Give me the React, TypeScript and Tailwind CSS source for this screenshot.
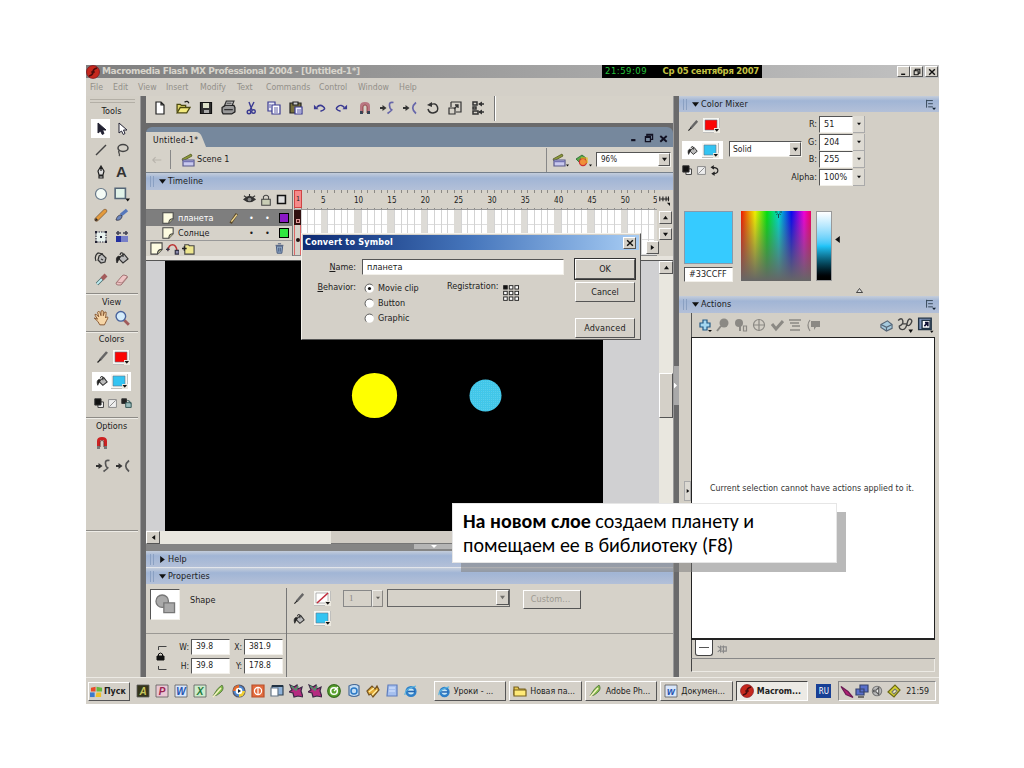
import React from "react";

type P = { children?: React.ReactNode; className?: string };

function Ic({ children, className = "w-[14px] h-[14px]" }: P) {
  return (
    <svg viewBox="0 0 14 14" fill="none" stroke="#333" strokeWidth="1.2" className={"shrink-0 " + className}>
      {children}
    </svg>
  );
}

const raised = "border border-t-white border-l-white border-r-[#555] border-b-[#555] bg-[#d4d0c8]";
const sunken = "border border-t-[#555] border-l-[#555] border-r-[#f2f0ea] border-b-[#f2f0ea] bg-white";

function Tri({ dir = "down", className = "w-[5px] h-[5px]" }: { dir?: string; className?: string }) {
  const d: Record<string, string> = {
    down: "M0 1h6L3 5z",
    up: "M0 5h6L3 1z",
    left: "M5 0v6L1 3z",
    right: "M1 0v6l4-3z",
  };
  return (
    <svg viewBox="0 0 6 6" className={"shrink-0 " + className}>
      <path d={d[dir]} fill="#111" />
    </svg>
  );
}

/* ---------- icons ---------- */
const Pencil = ({ c = "#e39a3c" }: { c?: string }) => (
  <Ic>
    <path d="M2.5 11.5L11 3" stroke="#8b6a48" strokeWidth="4.400" strokeLinecap="round" />
    <path d="M3.5 10.5L11 3" stroke={c} strokeWidth="3" strokeLinecap="round" />
    <path d="M1 13l1-3 2 2z" fill="#222" stroke="none" />
  </Ic>
);
const ThinPencil = ({ className }: P) => (
  <Ic className={className}>
    <path d="M4 10l7-8" stroke="#666" strokeWidth="2.600" />
    <path d="M1.500 12.500l3-3" stroke="#222" strokeWidth="1.2" />
  </Ic>
);
const Brush = () => (
  <Ic>
    <path d="M6 7l6-5" stroke="#5577bb" strokeWidth="3.400" />
    <path d="M1 12c1-4 3-5 5-5l1 1c0 3-3 5-6 4z" fill="#6a85bd" stroke="#334" strokeWidth=".8" />
  </Ic>
);
const Bucket = ({ className }: P) => (
  <Ic className={className}>
    <path d="M5 6l4-3 4 5-5 4-4-4z" fill="#bbb" stroke="#333" />
    <path d="M8 6V2.500Q6 .5 5 4" />
    <path d="M4 5Q0 6 2 12Q3.500 9 5 6z" fill="#222" stroke="#222" strokeWidth=".8" />
  </Ic>
);
const InkBottle = () => (
  <Ic>
    <path d="M5 5l3-2 4 4-1 4-4 1-3-3z" fill="#bbb" />
    <path d="M2 10Q0 5 4 2L9 3" />
    <path d="M7 8l2 1" />
  </Ic>
);
const Dropper = () => (
  <Ic>
    <path d="M3 11l6-6" stroke="#466" strokeWidth="3.400" />
    <path d="M3 11l5-5" stroke="#bdeaf0" strokeWidth="2" />
    <path d="M8 6l4-4" stroke="#a35b5b" strokeWidth="4" />
  </Ic>
);
const Eraser = () => (
  <Ic>
    <path d="M1 10l6-7q1-1 2-1l3 1q1 1 0 2l-6 7H3q-2 0-2-2z" fill="#eec4c4" stroke="#9a6b6b" strokeWidth=".9" />
    <path d="M2 9l5 1 5-6" stroke="#9a6b6b" strokeWidth=".7" />
  </Ic>
);
const Magnet = ({ c = "#c22" }: { c?: string }) => (
  <Ic>
    <path d="M3.500 11V5q0-2.500 3.500-2.500T10.500 5v6" stroke={c} strokeWidth="3" />
    <path d="M3.500 10v3M10.500 10v3" stroke="#777" strokeWidth="3" />
    <path d="M5.200 11V6q0-1.500 1.800-1.500T8.800 6v5" stroke="#411" strokeWidth=".6" />
  </Ic>
);
const SnapS = ({ c = "#6666aa" }: { c?: string }) => (
  <Ic>
    <path d="M0 7h4" strokeWidth="2" />
    <path d="M2.500 4l4 3-4 3z" fill="#333" stroke="none" />
    <path d="M13.500 1.500Q9 .5 9.500 4.500T11.500 8.500T7.500 12.500" stroke={c} strokeWidth="1.700" />
  </Ic>
);
const SnapC = ({ c = "#6666aa" }: { c?: string }) => (
  <Ic>
    <path d="M0 7h4" strokeWidth="2" />
    <path d="M2.500 4l4 3-4 3z" fill="#333" stroke="none" />
    <path d="M13 1.500Q6.500 7 13 12.500" stroke={c} strokeWidth="1.700" />
  </Ic>
);
const Arrow = ({ f = "#223" }: { f?: string }) => (
  <Ic>
    <path d="M4 1v10l2.500-2 1.800 3.500 1.700-1L8.500 8H12z" fill={f} stroke="#223" strokeWidth="1" />
  </Ic>
);
const BW = () => (
  <Ic className="w-[11px] h-[11px]">
    <path d="M5 5h7v7H5z" fill="#fff" />
    <path d="M1 1h8v8H1z" fill="#111" />
  </Ic>
);
const NoCol = () => (
  <Ic className="w-[11px] h-[11px]">
    <path d="M2 2h10v10H2zM3 11l8-8" stroke="#888" fill="#eee" />
  </Ic>
);
const Swap = () => (
  <Ic className="w-[11px] h-[11px]">
    <path d="M3 3q7 0 7 4t-6 4M5 1L2 3l3 2M6 9l-3 2 3 2" stroke="#222" strokeWidth="1.5" />
  </Ic>
);
const Page = ({ className = "w-[13px] h-[13px]" }: P) => (
  <Ic className={className}>
    <path d="M1 1h12v7l-5 5H1z" fill="#fdfbe0" stroke="#444" />
    <path d="M13 8Q8 8 8 13" fill="#cc9" stroke="#444" />
  </Ic>
);
const Clapper = () => (
  <Ic>
    <path d="M1 6L10 1l1 2-9 5z" fill="#8c9a3a" stroke="#565a22" strokeWidth=".8" />
    <path d="M2 7h11v6H2z" fill="#c9c9ee" stroke="#5a5a8a" />
    <path d="M2 8.500h11" stroke="#7474b4" strokeWidth="1.5" />
  </Ic>
);
const Shapes = () => (
  <Ic>
    <path d="M1 6l6-4 4 3-6 5z" fill="#5aa845" stroke="#263" strokeWidth=".8" />
    <circle cx="8" cy="9" r="3.600" fill="#f09038" stroke="#c33" />
    <path d="M6 5h6v5" stroke="#e0c020" />
  </Ic>
);
const Menu = () => (
  <Ic className="w-[11px] h-[11px]">
    <path d="M2 1v10M2 2h8M4 6h6M4 10h6" stroke="#345" />
    <path d="M9 11h5l-2.500 3z" fill="#123" stroke="none" />
  </Ic>
);
const Ie = ({ className }: P) => (
  <Ic className={className}>
    <circle cx="7" cy="7.500" r="4.300" stroke="#2f7fc8" strokeWidth="2.600" fill="#cbe8f6" />
    <path d="M4 7.500h7" stroke="#2363b0" strokeWidth="1.600" />
    <path d="M1 11Q0 5 12 2" stroke="#58b4e0" strokeWidth="1.200" />
  </Ic>
);

function Swatch({ kind }: { kind: "red" | "blue" | "none" }) {
  return (
    <svg viewBox="0 0 17 15" className="w-[17px] h-[15px] shrink-0">
      <rect width="17" height="15" fill="#f6f6f2" />
      <path d="M0 15h17V0" stroke="#888" fill="none" />
      <path d="M2 2h12v10H2z" fill={kind === "red" ? "#fb0505" : kind === "blue" ? "#33c4f2" : "#fff"} stroke={kind === "none" ? "#888" : "#678"} strokeWidth=".6" />
      {kind === "none" && <path d="M3 12L14 2" stroke="#c22c3c" strokeWidth="1.600" />}
      <path d="M11 10h6v5h-6z" fill="#ece9e0" />
      <path d="M11.500 11h4.500l-2.200 2.700z" fill="#111" />
    </svg>
  );
}

function PanelHead({ title, dir = "down", menu, className = "h-[17px]" }: { title: string; dir?: string; menu?: boolean; className?: string }) {
  return (
    <div className={"flex shrink-0 items-center bg-linear-to-b from-[#c4cddb] via-[#a1b5d5] via-30% to-[#b3c0d8] " + className}>
      <div className="ml-[4px] h-[11px] w-[4px] border-x border-[#8aa0c2]" />
      <Tri dir={dir} className="ml-[5px] h-[7px] w-[7px]" />
      <span className="ml-[2px] tracking-[0.1px]">{title}</span>
      {menu && <div className="mr-[3px] ml-auto"><Menu /></div>}
    </div>
  );
}

/* ---------- left tool palette ---------- */
function Section({ children }: P) {
  return <div className="h-[9px] w-[51px] text-center text-[9px] leading-[9px]">{children}</div>;
}
const Rule = () => <div className="h-[2px] w-[52px] shrink-0 border-t border-[#8d8b86] border-b border-b-[#eeece6]" />;

function Tools() {
  return (
    <aside className="flex w-[54px] shrink-0 flex-col bg-[#d3cfc6]">
      <div className="mt-[3px] ml-[4px] h-[4px] w-[45px] border-y border-[#b3afa6]" />
      <div className="mt-[4px]"><Section>Tools</Section></div>
      <div className="mt-[2px] ml-[4px] grid grid-cols-[21px_21px] auto-rows-[21.6px] place-items-center">
        <div className="flex h-[19px] w-[19px] items-center justify-center bg-white"><Arrow /></div>
        <Arrow f="#fff" />
        <Ic><path d="M2 12L12 2" stroke="#444" strokeWidth="1.5" /></Ic>
        <Ic><ellipse cx="8" cy="5" rx="5" ry="3.500" stroke="#444" strokeWidth="1.5" /><path d="M5 7q-2 1-1 3t0 3" stroke="#444" /></Ic>
        <Ic><path d="M7 1L4 6l1 4h4l1-4zM5 11h4v2H5zM7 1v5" fill="#ddd" stroke="#222" /></Ic>
        <span className="font-['Liberation_Sans',sans-serif] text-[15px] leading-none font-bold text-[#333]">A</span>
        <Ic><circle cx="7" cy="7" r="5.500" fill="#f4fbf6" stroke="#678" /></Ic>
        <Ic className="w-[16px] h-[16px]"><path d="M1 2h9v9H1z" fill="#e0f2e8" stroke="#567" strokeWidth="1.4" /><path d="M10 11h4l-2 2.500z" fill="#111" stroke="none" /></Ic>
        <Pencil />
        <Brush />
        <Ic><path d="M2 2h10v10H2z" stroke="#334" strokeDasharray="1.500 1" fill="#e9f2ee" /><path d="M1 1h2v2H1zM11 1h2v2h-2zM1 11h2v2H1zM11 11h2v2h-2zM6 6h2v2H6z" fill="#223" stroke="none" /></Ic>
        <Ic><path d="M1 6h12v6H1z" fill="#7880c8" stroke="none" /><path d="M1 6h5v6H1z" fill="#2430a0" stroke="none" /><path d="M1 3h5M8 3h5" stroke="#445" strokeWidth="1.600" /><path d="M3 1v4M11 1v4" stroke="#445" strokeWidth="1.600" /></Ic>
        <InkBottle />
        <Bucket />
        <Dropper />
        <Eraser />
      </div>
      <div className="mt-[2px]"><Rule /></div>
      <div className="mt-[3px]"><Section>View</Section></div>
      <div className="mt-[2px] ml-[4px] grid h-[19px] grid-cols-[21px_21px] place-items-center">
        <Ic className="w-[16px] h-[16px]"><path d="M4 8L2 5q-1-2 1-1l2 2-1-4q1-2 2 0l1 3V1q1-1 2 0v4l1-3q2-1 1.500 1L11 7l1-1q2 0 0 3l-2 4H6q-1-3-5-6z" fill="#f6d5a6" stroke="#83522c" strokeWidth=".8" /></Ic>
        <Ic className="w-[16px] h-[16px]"><path d="M9 9l4 4" stroke="#a05a5a" strokeWidth="2.500" /><circle cx="6" cy="5.500" r="4.200" fill="#d4ecfb" stroke="#47629c" /></Ic>
      </div>
      <div className="mt-[3px]"><Rule /></div>
      <div className="mt-[2px]"><Section>Colors</Section></div>
      <div className="mt-[6px] ml-[10px] flex h-[15px] items-center gap-[3px]"><ThinPencil /><Swatch kind="red" /></div>
      <div className="mt-[7px] ml-[6px] flex h-[19px] w-[39px] items-center gap-[3px] bg-white pl-[4px]"><Bucket className="w-[12px] h-[12px]" /><Swatch kind="blue" /></div>
      <div className="mt-[7px] ml-[8px] flex gap-[2px]"><BW /><NoCol /><Ic className="w-[13px] h-[11px]"><path d="M1 1h6v6H1z" fill="#222" /><path d="M6 6h7v6H6zM8 3q4 0 4 4" fill="#9bb" stroke="#355" /></Ic></div>
      <div className="mt-[8px]"><Rule /></div>
      <div className="mt-[3px]"><Section>Options</Section></div>
      <div className="mt-[5px] ml-[9px]"><Magnet /></div>
      <div className="mt-[9px] ml-[10px] flex gap-[6px]"><SnapS c="#555" /><SnapC c="#555" /></div>
      <div className="mt-[57px]"><Rule /></div>
    </aside>
  );
}

/* ---------- main toolbar ---------- */
function Toolbar() {
  const u = "#3a3a92";
  return (
    <div className="flex h-[27px] shrink-0 items-start bg-[#d6d2c9] pl-[3px]">
      <div className="grid h-[23px] grid-cols-[repeat(15,22.7px)] place-items-center">
        <Ic><path d="M3 1h5l3 3v9H3zM8 1v3h3" fill="#fff" stroke="#222" /></Ic>
        <Ic className="w-[15px] h-[15px]"><path d="M1 11V4h3l1 1h4v2" fill="#dfd66a" stroke="#4c4a10" /><path d="M1 12l3-5h9l-3 5z" fill="#f3ea7d" stroke="#4c4a10" /><path d="M8 2q3-2 4 1" stroke="#222" /></Ic>
        <Ic><path d="M1.500 1.500h11v11h-11z" fill="#333" stroke="#111" /><path d="M4 2h6v5H4z" fill="#dde0c8" stroke="none" /><path d="M5 9h5v3H5z" fill="#aaa" stroke="none" /></Ic>
        <Ic className="w-[15px] h-[15px]"><path d="M5 1h7l-2 5H3z" fill="#fff" stroke="#333" /><path d="M1 7l3-2h8l1 2v4l-3 2H2l-1-2z" fill="#999" stroke="#222" /><path d="M3 9h8M5 3h5M4 5h5" stroke="#333" /></Ic>
        <Ic><path d="M5 1l3 8M10 1L6 9" stroke={u} strokeWidth="1.400" /><circle cx="5" cy="11" r="1.800" stroke={u} strokeWidth="1.400" /><circle cx="9.500" cy="10.500" r="1.800" stroke={u} strokeWidth="1.400" /></Ic>
        <Ic><path d="M1 1h7v9H1z" fill="#e9eaf5" stroke={u} /><path d="M5 4h8v9H5z" fill="#fff" stroke={u} /><path d="M7 7h4M7 9h4M7 11h4M2 4h2M2 6h2" stroke={u} strokeWidth=".8" /></Ic>
        <Ic><path d="M1 2h11v10H1z" fill="#77703c" stroke="#222" /><path d="M4 1h5v3H4z" fill="#ccc" stroke="#222" /><path d="M6 6h7v7H6z" fill="#eef" stroke={u} /><path d="M8 9h4M8 11h4" stroke={u} strokeWidth=".8" /></Ic>
        <Ic className="w-[13px] h-[13px]"><path d="M4 7q3-4 7-1t-3 5" stroke={u} strokeWidth="1.600" /><path d="M1 4v5h5z" fill={u} stroke="none" /></Ic>
        <Ic className="w-[13px] h-[13px]"><path d="M10 7Q7 3 3 6t3 5" stroke={u} strokeWidth="1.600" /><path d="M13 4v5H8z" fill={u} stroke="none" /></Ic>
        <Ic><path d="M3.500 11V5q0-2.500 3.500-2.500T10.500 5v6" stroke="#b97782" strokeWidth="3" /><path d="M3.500 10v3M10.500 10v3" stroke="#345" strokeWidth="3" /><path d="M5 12V6q0-2 2-2t2 2v6" stroke="#833" strokeWidth=".8" /></Ic>
        <SnapS />
        <SnapC />
        <Ic><path d="M4 4Q10 1 11.500 6T7 12Q3 12 2 8" stroke="#333" strokeWidth="1.500" /><path d="M1 4l5-3v5z" fill="#333" stroke="none" /></Ic>
        <Ic><path d="M3 1h10v10H8M3 1v5M1 7h6v6H1z" /><path d="M6 8l4-4M7 4h3v3" strokeWidth="1.300" /></Ic>
        <Ic><path d="M2 1h4v3H2zM2 6h3v2H2zM2 10h5v3H2zM8 3h5M8 11h5" stroke="#333" strokeWidth="1.500" /><path d="M7 3l4-2.500v5zM7 11l4-2.500v5z" fill="#333" stroke="none" /></Ic>
      </div>
      <div className="ml-[5px] h-[25px] w-[2px] border-l border-[#777] bg-white" />
    </div>
  );
}

/* ---------- document window ---------- */
function Doc() {
  const nums = ["10", "15", "20", "25", "30", "35", "40", "45", "50"];
  return (
    <div className="flex shrink-0 flex-col">
      <div className="flex h-[20px] items-end rounded-t-[6px] bg-[#76889d]">
        <svg viewBox="0 0 64 15" className="h-[15px] w-[64px]">
          <path d="M0 15V0h50q4 0 6 5l4 10z" fill="#d6d2c9" />
          <text x="7" y="10.500" className="font-['DejaVu_Sans_Condensed','DejaVu_Sans',sans-serif] text-[8.500px]" textLength="45" fill="#111">Untitled-1*</text>
        </svg>
        <div className="mr-[5px] mb-[4px] ml-auto flex items-center gap-[5px]">
          <Ic className="h-[10px] w-[10px]"><path d="M3 10h6" stroke="#112" strokeWidth="3" /></Ic>
          <Ic className="h-[10px] w-[10px]"><path d="M4 5V2h8v7H9M2 5h7v7H2zM2 6h7M4 3h8" stroke="#112" strokeWidth="1.800" /></Ic>
          <Ic className="h-[9px] w-[9px]"><path d="M2 3l10 9M12 3L2 12" stroke="#112" strokeWidth="3" /></Ic>
        </div>
      </div>
      <div className="flex h-[26px] items-center border-b border-[#77818c] bg-[#d6d2c9]">
        <Ic className="ml-[6px] h-[10px] w-[10px]"><path d="M1 7h12M5 3L1 7l4 4" stroke="#b7b3ab" strokeWidth="1.500" /></Ic>
        <div className="ml-[8px] h-[19px] w-px bg-[#888]" />
        <div className="ml-[10px]"><Clapper /></div>
        <span className="ml-[2px]">Scene 1</span>
        <div className="ml-auto h-[24px] w-px bg-[#888]" />
        <div className="ml-[5px] flex items-end"><Clapper /><Tri className="h-[3px] w-[3px]" /></div>
        <div className="ml-[6px] flex items-end"><Shapes /><Tri className="h-[3px] w-[3px]" /></div>
        <div className={"ml-[4px] mr-[2px] flex h-[15px] w-[75px] items-center justify-between pl-[4px] text-[8px] " + sunken}>
          96%
          <div className={"flex h-full w-[12px] items-center justify-center " + raised}><Tri /></div>
        </div>
      </div>
      <PanelHead title="Timeline" />
      <div className="flex h-[66px] bg-[#d6d2c9]">
        <div className="flex w-[147px] flex-col border-r border-[#777]">
          <div className="flex h-[20px] items-center justify-end gap-[4px] border-b border-[#777] pr-[5px]">
            <Ic className="h-[13px] w-[13px]"><path d="M0 7q7-8 14 0-7 6-14 0z" fill="#333" stroke="none" /><path d="M1 3l3 2M7 1v3M13 3l-3 2" /><circle cx="7" cy="7" r="2" fill="#888" stroke="none" /></Ic>
            <Ic className="h-[12px] w-[12px]"><path d="M2 6h10v7H2z" fill="#c9cdb5" stroke="#444" /><path d="M4 6V3q3-3 6 0v3" stroke="#444" /></Ic>
            <Ic className="h-[11px] w-[11px]"><path d="M2 2h10v10H2z" strokeWidth="2" stroke="#111" fill="#ddd" /></Ic>
          </div>
          <div className="flex h-[16px] items-center bg-[#7e7e7e] text-white">
            <div className="ml-[16px]"><Page className="h-[12px] w-[12px]" /></div>
            <span className="ml-[4px] w-[51px]">планета</span>
            <Ic className="h-[11px] w-[11px]"><path d="M2 13L10 1" stroke="#5c4a2a" strokeWidth="3.500" /><path d="M3 11L10 2" stroke="#f0d890" strokeWidth="1.800" /></Ic>
            <span className="ml-[9px] w-[16px]">•</span><span className="w-[14px]">•</span>
            <div className="h-[10px] w-[10px] border border-black bg-[#8a18c6]" />
          </div>
          <div className="flex h-[15px] items-center border-b border-[#999]">
            <div className="ml-[16px]"><Page className="h-[12px] w-[12px]" /></div>
            <span className="ml-[4px] w-[71px]">Солнце</span>
            <span className="w-[16px]">•</span><span className="w-[14px]">•</span>
            <div className="h-[10px] w-[10px] border border-black bg-[#2fe63f]" />
          </div>
          <div className="flex h-[15px] items-center gap-[3px] pl-[4px]">
            <Page />
            <Ic className="h-[13px] w-[13px]"><path d="M2 9q1-6 5-6t5 7" stroke="#b33" strokeWidth="1.600" /><path d="M0 8h4M2 6v4M10 9h4v4h-4z" stroke="#334" strokeWidth="1.300" fill="#88a" /></Ic>
            <Ic className="h-[13px] w-[13px]"><path d="M3 3h4l1 1h5v9H3z" fill="#eee68e" stroke="#444" /><path d="M0 7h5M2.500 4.500v5" stroke="#222" strokeWidth="1.400" /></Ic>
            <Ic className="mr-[7px] ml-auto h-[11px] w-[11px]"><path d="M3 4h8l-1 9H4z" fill="#8da6c4" stroke="#47597c" /><path d="M2 3h10M5 1h4M6 6v5M8 6v5" stroke="#47597c" /></Ic>
          </div>
        </div>
        <div className="flex w-[364px] flex-col overflow-hidden border-b border-[#888] pl-[1px]">
          <div className="flex h-[20px] shrink-0 flex-col justify-between border-b border-[#999] bg-[repeating-linear-gradient(90deg,#8c8a86_0_1px,transparent_1px_6.670px)]">
            <div className="mt-[3px] mb-[2px] flex flex-1 items-center bg-[#d6d2c9] text-[8px]">
              <div className="-mt-[3px] flex h-[18px] w-[8px] shrink-0 items-center justify-center border border-[#d04444] bg-[#f58a8a] text-[7px]">1</div>
              <span className="w-[52px] shrink-0 pl-[19px]">5</span>
              {nums.map((n) => <span key={n} className="w-[33.350px] shrink-0">{n}</span>)}
              <span className="-ml-px">5</span>
            </div>
          </div>
          <div className="h-[46px] bg-white bg-[repeating-linear-gradient(90deg,transparent_0_26.700px,#dddbd6_26.700px_33.350px),repeating-linear-gradient(90deg,#d3d3d3_0_1px,transparent_1px_6.670px),repeating-linear-gradient(0deg,#ddd_0_1px,transparent_1px_15px)]">
            <div className="flex h-[15px] w-[7px] items-end justify-center bg-[#301010] pb-[2px]"><div className="h-[4px] w-[4px] border border-[#d99] bg-[#511]" /></div>
            <div className="flex h-[30px] w-[7px] items-center justify-center border-x border-[#d66] bg-[#d6d2c9]"><div className="h-[4px] w-[4px] rounded-full bg-[#211]" /></div>
          </div>
        </div>
        <div className="flex w-[16px] flex-col items-end pr-[1px]">
          <div className="flex h-[21px] w-full items-center justify-center"><Ic className="h-[11px] w-[11px]"><path d="M1 2v6M5 2v6M9 2v6M12 2v6M2 5h11" stroke="#222" strokeWidth="1.400" /><path d="M10 10h4v4z" fill="#111" stroke="none" /></Ic></div>
          <div className={"flex h-[13px] w-[13px] items-center justify-center " + raised}><Tri dir="up" /></div>
          <div className={"mt-[4px] flex h-[12px] w-[13px] items-center justify-center " + raised}><Tri /></div>
          <div className={"mt-[1px] mr-[13px] flex h-[13px] w-[13px] items-center justify-center " + raised}><Tri dir="right" /></div>
        </div>
      </div>
      <div className="h-[5px] border-b border-[#555] bg-[#e6e3dc]" />
    </div>
  );
}

function Stage() {
  return (
    <div className="flex h-[270px] shrink-0 bg-[#d0d0d2]">
      <div className="ml-[19px] h-full w-[438px] bg-black">
        <svg viewBox="0 0 438 270" className="h-full w-full">
          <defs>
            <pattern id="dots" width="2" height="2" patternUnits="userSpaceOnUse">
              <rect width="2" height="2" fill="#35c8f4" />
              <rect width="1" height="1" fill="#62cde2" />
              <rect x="1" y="1" width="1" height="1" fill="#4fc4dc" />
            </pattern>
          </defs>
          <circle cx="209.500" cy="134.500" r="22.600" fill="#ffff00" />
          <circle cx="320.500" cy="134.500" r="16" fill="url(#dots)" />
        </svg>
      </div>
      <div className="ml-auto flex w-[14px] flex-col bg-[#e9e7df]">
        <div className={"flex h-[13px] items-center justify-center " + raised}><Tri dir="up" /></div>
        <div className={"mt-[99px] h-[45px] " + raised} />
      </div>
    </div>
  );
}

function Field({ label, value }: { label: string; value: string }) {
  return (
    <div className="flex items-center">
      <span className="w-[14px] pr-[2px] text-right text-[8.500px]">{label}</span>
      <div className={"h-[16px] w-[39px] pl-[4px] text-[8.500px] leading-[13px] " + sunken}>{value}</div>
    </div>
  );
}

function Properties() {
  return (
    <div className="flex h-[93px] shrink-0 bg-[#d6d2c9]">
      <div className="flex w-[140px] shrink-0 flex-col">
        <div className="flex h-[50px] items-start border-b border-[#9b9994] pt-[5px] pl-[4px]">
          <div className={"flex h-[31px] w-[30px] items-center justify-center " + sunken + " bg-[#ebe9e4]"}>
            <Ic className="h-[23px] w-[23px]"><circle cx="5" cy="5" r="3.800" fill="#aaa" stroke="#777" strokeWidth=".8" /><path d="M6 6h6.500v6H6z" fill="#aaa" stroke="#777" strokeWidth=".8" /></Ic>
          </div>
          <span className="mt-[6px] ml-[10px]">Shape</span>
        </div>
        <div className="flex pt-[5px] pl-[10px]">
          <svg viewBox="0 0 12 30" className="mt-[4px] h-[30px] w-[12px] shrink-0" fill="none" stroke="#444">
            <path d="M2.500 7V3.500h8M2.500 23v3.500h8" />
            <path d="M1 13h7v4H1z" fill="#111" stroke="#111" />
            <path d="M2.500 13v-2q2-2 4 0v2" stroke="#111" />
          </svg>
          <div className="ml-[9px] grid grid-cols-[53px_53px] gap-y-[3px]">
            <Field label="W:" value="39.8" /><Field label="X:" value="381.9" />
            <Field label="H:" value="39.8" /><Field label="Y:" value="178.8" />
          </div>
        </div>
      </div>
      <div className="mt-[4px] w-px bg-[#777]" />
      <div className="min-w-0 flex-1">
        <div className="flex h-[50px] flex-col border-b border-[#9b9994] pt-[5px]">
          <div className="flex h-[18px] items-center pl-[6px]">
            <ThinPencil className="h-[13px] w-[13px]" />
            <div className="ml-[8px]"><Swatch kind="none" /></div>
            <div className="ml-[12px] h-[17px] w-[29px] border border-[#888] pl-[5px] font-['Liberation_Serif',serif] leading-[14px] text-[#8b8983]">1</div>
            <div className={"flex h-[17px] w-[11px] items-center justify-center opacity-60 " + raised}><Tri className="h-[4px] w-[4px]" /></div>
            <div className="ml-[4px] flex h-[18px] w-[123px] justify-end border border-[#666]"><div className={"flex h-[15px] w-[13px] items-center justify-center " + raised}><Tri className="h-[5px] w-[5px] opacity-50" /></div></div>
            <div className={"mt-[3px] ml-[13px] flex h-[19px] w-[58px] shrink-0 items-center justify-center text-[#9c9991] " + raised}><span className="pr-[3px] tracking-[0.100px]">Custom...</span></div>
          </div>
          <div className="mt-[4px] flex items-center pl-[6px]">
            <Bucket className="h-[12px] w-[12px]" />
            <div className="ml-[9px]"><Swatch kind="blue" /></div>
          </div>
        </div>
      </div>
    </div>
  );
}

/* ---------- right panels ---------- */
function Channel({ label, value }: { label: string; value: string }) {
  return (
    <div className="flex h-[17.500px] items-center">
      <span className="w-[30px] pr-[2px] text-right">{label}</span>
      <div className={"h-[17px] w-[34px] pl-[4px] leading-[15px] " + sunken}>{value}</div>
      <div className="flex h-[17px] w-[12px] items-center justify-center border-r border-b border-[#aaa] bg-[#dedbd3]"><Tri className="h-[4px] w-[4px]" /></div>
    </div>
  );
}

function Mixer() {
  return (
    <div className="flex h-[184px] shrink-0 flex-col bg-[#d3cfc6]">
      <div className="flex pt-[4px]">
        <div className="flex w-[50px] flex-col pl-[3px]">
          <div className="flex h-[18px] items-center gap-[3px] pl-[5px]"><ThinPencil className="h-[13px] w-[13px]" /><Swatch kind="red" /></div>
          <div className="mt-[7px] flex h-[18px] w-[41px] items-center gap-[4px] bg-white pl-[5px]"><Bucket className="h-[11px] w-[11px]" /><Swatch kind="blue" /></div>
          <div className="mt-[6px] flex gap-[3px]"><BW /><NoCol /><Swap /></div>
        </div>
        <div className={"mt-[25px] flex h-[16px] w-[73px] items-center justify-between pl-[3px] text-[8.500px] " + sunken}>
          Solid
          <div className={"flex h-full w-[12px] items-center justify-center " + raised}><Tri /></div>
        </div>
        <div className="-ml-[13px] flex flex-col">
          <Channel label="R:" value="51" />
          <Channel label="G:" value="204" />
          <Channel label="B:" value="255" />
          <Channel label="Alpha:" value="100%" />
        </div>
      </div>
      <div className="mt-[25px] flex pl-[5px]">
        <div className="w-[49px]">
          <div className="h-[53px] border border-[#89a] bg-[#36cbff]" />
          <div className={"mt-[3px] h-[15px] pl-[4px] text-[9px] leading-[13px] " + sunken}>#33CCFF</div>
        </div>
        <div className="ml-[8px] h-[70px] w-[70px] bg-[linear-gradient(to_bottom,transparent,#666),linear-gradient(to_right,#f01800,#f0f000_20%,#00e010_37%,#00d8d0_54%,#0808f0_72%,#f000d8_90%,#f00060)]">
          <Ic className="ml-[33px] h-[7px] w-[9px]"><path d="M0 2h5M9 2h5M7 6v8M5 5l-2 3M9 5l2 3" stroke="#222" strokeWidth="1.500" /></Ic>
        </div>
        <div className="ml-[5px] h-[70px] w-[16px] border border-[#999] bg-linear-to-b from-white via-[#20c4f8] to-black" />
        <Tri dir="left" className="mt-[24px] ml-[2px] h-[9px] w-[7px]" />
      </div>
      <Ic className="mt-[5px] ml-[176px] h-[7px] w-[9px]"><path d="M1 11h12L7 3z" stroke="#222" strokeWidth="1.600" fill="#ddd" /></Ic>
    </div>
  );
}

function Actions() {
  const g = "#8b8984";
  return (
    <div className="flex min-h-0 flex-1 flex-col bg-[#d3cfc6]">
      <div className="ml-[12px] flex h-[24px] shrink-0 items-center border-l border-[#555] pl-[6px]">
        <div className="flex items-center gap-[4px]">
          <Ic><path d="M5 2h4v3h3v4H9v3H5V9H2V5h3z" fill="#a5d7ef" stroke="#235a86" /><path d="M10 12h4l-2 2z" fill="#111" stroke="none" /></Ic>
          <Ic><circle cx="8" cy="5" r="4.500" fill={g} stroke="none" /><path d="M5 8l-4 5" stroke={g} strokeWidth="2" /></Ic>
          <Ic><circle cx="5" cy="5" r="4" fill={g} stroke="none" /><path d="M6 7v6" stroke={g} strokeWidth="2" /><path d="M9.500 8h3v5h-3z" stroke={g} /></Ic>
          <Ic><circle cx="7" cy="7" r="5.500" stroke={g} /><path d="M7 1v12M1 7h12" stroke={g} /></Ic>
          <Ic><path d="M2 6l4 5 7-8" stroke={g} strokeWidth="3" /></Ic>
          <Ic><path d="M1 2h12M2 5h9M4 8h8M2 12h10" stroke={g} strokeWidth="1.600" /></Ic>
          <Ic><path d="M4 2Q0 7 4 13" stroke={g} /><path d="M5 3h9v6h-4l-2 3V9H5z" fill={g} stroke="none" /></Ic>
        </div>
        <div className="mr-[5px] ml-auto flex items-center gap-[4px]">
          <Ic className="h-[13px] w-[13px]"><path d="M1 6l7-4 5 4v4l-6 3-6-4z" fill="#a6cadd" stroke="#567" /><path d="M1 6l6 3 6-3M7 9v4" stroke="#567" /></Ic>
          <Ic className="h-[16px] w-[16px]"><path d="M1 3q3-3 4 0T2 8q0 3 3 3t4-6q1-4 3-3t0 4-4 0M5 6h4" stroke="#444" /><path d="M10 11h4l-2 3z" fill="#111" stroke="none" /></Ic>
          <Ic className="h-[16px] w-[17px]"><path d="M1 1h11v10H1z" fill="#7c93bb" stroke="#234" /><path d="M4 3h7v7H4z" fill="#fff" stroke="#234" /><path d="M6 8l3-3M6.500 5H9v3" stroke="#113" strokeWidth="1.500" /><path d="M11 12h3l-1.500 2z" fill="#111" stroke="none" /></Ic>
        </div>
      </div>
      <div className="flex h-[303px] shrink-0">
        <div className="mt-[144px] ml-[5px] flex h-[20px] w-[7px] items-center justify-center border border-[#aaa] bg-[#dcd9d2]"><Tri dir="right" className="h-[4px] w-[4px]" /></div>
        <div className="mr-[4px] flex-1 border border-b-2 border-[#222] bg-white pt-[145px] pl-[18px] text-[#333]">
          <span className="text-[8.800px] tracking-[0.020px] whitespace-nowrap">Current selection cannot have actions applied to it.</span>
        </div>
      </div>
      <div className="mr-[4px] ml-[12px] flex h-[19px] shrink-0 items-start gap-[4px] border-b border-l border-[#888] border-l-[#444] pl-[3px]">
        <div className="flex h-[16px] w-[18px] items-center justify-center rounded-b-[3px] border border-t-0 border-[#444] bg-white"><div className="h-px w-[10px] bg-[#555]" /></div>
        <Ic className="mt-[4px] h-[10px] w-[10px]"><path d="M1 3l5 4-5 4M5 2v10M6 4h7v6H6M9 2v11" stroke="#888" strokeWidth="1.600" /></Ic>
      </div>
      <div className="mr-[4px] ml-[12px] h-[13px] shrink-0 border-r border-b border-l border-[#eceae4] border-l-[#444]" />
    </div>
  );
}

/* ---------- dialog ---------- */
function DlgButton({ children, className = "" }: P) {
  return <div className={"flex h-[20px] w-[60px] items-center justify-center " + raised + " " + className}>{children}</div>;
}
function Radio({ on, children }: P & { on?: boolean }) {
  return (
    <div className="flex h-[15px] items-center gap-[3px]">
      <Ic className="h-[11px] w-[11px]"><circle cx="7" cy="7" r="5.500" fill="#fff" stroke="none" /><path d="M3 11A5.600 5.600 0 0 1 11 3" stroke="#555" />{on && <circle cx="7" cy="7" r="2" fill="#111" stroke="none" />}</Ic>
      <span>{children}</span>
    </div>
  );
}
function Dialog() {
  return (
    <div className="absolute top-[168px] left-[215px] flex h-[107px] w-[340px] flex-col border border-t-[#f4f2ec] border-r-[#555] border-b-[#555] border-l-[#f4f2ec] bg-[#d4d0c8] p-px">
      <div className="flex h-[15px] shrink-0 items-center justify-between bg-linear-to-r from-[#0e2a72] via-[#4676bc] to-[#a8cdf4] pr-[3px] pl-[2px] text-white">
        <span className="text-[9px] font-bold tracking-[0.200px]">Convert to Symbol</span>
        <div className={"flex h-[12px] w-[13px] items-center justify-center " + raised}><Ic className="h-[8px] w-[8px]"><path d="M2 2l10 10M12 2L2 12" stroke="#111" strokeWidth="2.500" /></Ic></div>
      </div>
      <div className="flex pt-[9px]">
        <div className="w-[261px]">
          <div className="flex h-[16px] items-center">
            <span className="w-[54px] pr-[1px] text-right"><u>N</u>ame:</span>
            <div className={"ml-[5px] h-[16px] w-[202px] pl-[4px] leading-[15px] " + sunken}>планета</div>
          </div>
          <div className="flex pt-[5px]">
            <span className="w-[54px] pr-[1px] text-right leading-[14px]"><u>B</u>ehavior:</span>
            <div className="ml-[7px] w-[83px] pt-px"><Radio on>Movie clip</Radio><Radio>Button</Radio><Radio>Graphic</Radio></div>
            <span className="w-[53px] leading-[13px]">Registration:</span>
            <svg viewBox="0 0 17 17" className="mt-[5px] ml-[3px] h-[16px] w-[16px]">
              {[0, 1, 2].map((r) => [0, 1, 2].map((c) => (
                <rect key={r * 3 + c} x={c * 6 + 0.7} y={r * 6 + 0.7} width="3.800" height="3.600" fill={r + c === 0 ? "#111" : "#fff"} stroke="#222" strokeWidth="1" />
              )))}
            </svg>
          </div>
        </div>
        <div className="ml-[11px] flex flex-col">
          <DlgButton className="outline-1 outline-[#333]">OK</DlgButton>
          <DlgButton className="mt-[3px]">Cancel</DlgButton>
          <DlgButton className="mt-[16px]"><span className="tracking-[0.200px]">Advanced</span></DlgButton>
        </div>
      </div>
    </div>
  );
}

/* ---------- taskbar ---------- */
function Box({ fill, letter, color = "#fff" }: { fill: string; letter: string; color?: string }) {
  return (
    <Ic>
      <path d="M1 1h12v12H1z" fill={fill} stroke="#5a5a5a" strokeWidth=".8" />
      <text x="7" y="10.800" textAnchor="middle" fill={color} stroke="none" className="font-['Liberation_Sans',sans-serif] text-[10px] font-bold italic">{letter}</text>
    </Ic>
  );
}
const Splat = () => <Ic><path d="M1 1l4 2 3-2 1 4 4-2-1 4 2 6-5-1-4 1-1-4-4-1 3-2z" fill="#b52b80" stroke="#3b2846" /><path d="M2 2l5 4 2-4" stroke="#4b9868" strokeWidth="1.600" /></Ic>;
const Feather = () => <Ic><path d="M1 12Q5 4 10 1q3 4-2 8-3 3-7 3z" fill="#86bd4a" stroke="#4c703a" strokeWidth=".8" /><path d="M1 13L9 4" stroke="#f6f2c4" strokeWidth="1.500" /></Ic>;
const Flash = () => <Ic><circle cx="7" cy="7" r="6.500" fill="#c5281d" stroke="#701" strokeWidth=".6" /><path d="M3 11q4-1 4-4t4-4" stroke="#4a0c0c" strokeWidth="1.600" /><path d="M5 7h4" stroke="#4a0c0c" /></Ic>;

function Task({ icon, children, active }: { icon: React.ReactNode; children: React.ReactNode; active?: boolean }) {
  return (
    <div className={"mr-[3px] flex h-[20px] w-[72.500px] shrink-0 items-center gap-[3px] pl-[3px] whitespace-nowrap " + (active ? "border border-t-[#444] border-l-[#444] border-r-white border-b-white bg-[#eceae5] font-bold" : raised)}>
      {icon}<span className="tracking-[-0.050px]">{children}</span>
    </div>
  );
}

function Taskbar() {
  return (
    <div className="flex h-[27px] shrink-0 items-center border-t border-[#eceae4] bg-[#d4d0c8] pl-[2px] text-[8.800px]">
      <div className={"flex h-[19px] w-[42px] shrink-0 items-center gap-[1px] pl-px font-bold " + raised}>
        <Ic className="h-[13px] w-[13px]"><path d="M1 3l5-1v5H1z" fill="#e84b28" stroke="none" /><path d="M7 2l6 1v4H7z" fill="#67b73e" stroke="none" /><path d="M0 8h5v5H0z" fill="#3a79cc" stroke="none" /><path d="M7 8h5v5H6z" fill="#f0c12a" stroke="none" /></Ic>
        <span>Пуск</span>
      </div>
      <div className="ml-[3px] grid shrink-0 grid-cols-[repeat(15,19.200px)] place-items-center">
        <Box fill="#35351b" letter="A" color="#c8c65d" />
        <Box fill="#e9c7d3" letter="P" color="#9a2350" />
        <Box fill="#d9e6fa" letter="W" color="#2453b0" />
        <Box fill="#cdebcc" letter="X" color="#20783a" />
        <Feather />
        <Ic><circle cx="7" cy="7" r="6" fill="#4d86cf" stroke="#556" /><path d="M7 1a6 6 0 0 0-6 6h6z" fill="#e66a2b" stroke="none" /><path d="M7 13a6 6 0 0 0 6-6H7z" fill="#f0cf35" stroke="none" /><circle cx="7" cy="7" r="3.300" fill="#fff" stroke="none" /><path d="M6 5l3 2-3 2z" fill="#123" stroke="none" /></Ic>
        <Ic><path d="M1 1h12v12H1z" fill="#e46a3c" stroke="#b7502c" /><circle cx="7" cy="7" r="3.600" stroke="#fff" fill="#e46a3c" /><path d="M7 4v6" stroke="#fff" /></Ic>
        <Ic><path d="M2 2h11v9H2z" fill="#8fb2d9" stroke="#345" /><path d="M1 4h7v8H1z" fill="#fff" stroke="#678" /><path d="M2 2h11" stroke="#234" strokeWidth="2" /></Ic>
        <Splat />
        <Splat />
        <Ic><circle cx="7" cy="7" r="6.300" fill="#59a32e" stroke="#386d20" /><circle cx="7" cy="7" r="3.300" stroke="#fff" strokeWidth="1.500" /><path d="M7 7l4-4" stroke="#fff" /></Ic>
        <Ic><path d="M2 2q6-3 10 0v9q-5 3-10 0z" fill="#c3ddf4" stroke="#4a6c98" /><circle cx="7" cy="7" r="3" stroke="#2b79c5" strokeWidth="1.500" /></Ic>
        <Ic><path d="M1 7l5-5 3 3 2-3 2 4-6 7-2-3-2 1z" fill="#e4aa36" stroke="#735322" /><path d="M3 8l5-4M6 11l5-5" stroke="#fff0a8" /></Ic>
        <Ic><path d="M3 1h9v11H2z" fill="#a6c0ef" stroke="#5e7dbd" /><path d="M4 4h6M4 7h6" stroke="#dce8ff" /></Ic>
        <Ie />
      </div>
      <div className="ml-[13px] flex shrink-0">
        <Task icon={<Ie className="h-[13px] w-[13px]" />}>Уроки - ...</Task>
        <Task icon={<Ic><path d="M1 11V3h4l1 2h6v2" fill="#e8c84f" stroke="#77601d" /><path d="M1 12V6h12v6z" fill="#ffea78" stroke="#77601d" /></Ic>}>Новая па...</Task>
        <Task icon={<Feather />}>Adobe Ph...</Task>
        <Task icon={<Box fill="#d9e6fa" letter="w" color="#2453b0" />}>Докумен...</Task>
        <Task active icon={<Flash />}>Macrom...</Task>
      </div>
      <div className="ml-[5px] flex h-[14px] w-[15px] shrink-0 items-center justify-center bg-[#173f95] text-[8px] text-white">RU</div>
      <div className="ml-[7px] flex h-[20px] w-[98px] shrink-0 items-center border border-t-[#888] border-l-[#888] border-r-white border-b-white pl-[1px]">
        <Ic className="h-[15px] w-[14px]"><path d="M1 2l7 5 5 6-7-3z" fill="#b32075" stroke="#6b1b54" /></Ic>
        <Ic className="ml-px h-[14px] w-[14px]"><path d="M5 1h8v7H5zM1 5h8v6H1z" fill="#596fca" stroke="#35436f" /><path d="M3 13h6" /></Ic>
        <Ic className="ml-[2px] h-[12px] w-[12px]"><circle cx="7" cy="7" r="5.500" fill="#bbb" stroke="#777" /><path d="M3 6h3l3-3v8L6 8H3z" fill="#eee" stroke="#555" /></Ic>
        <Ic className="ml-[4px] h-[14px] w-[14px]"><path d="M1 8l7-7 5 5-6 7z" fill="#d7d32e" stroke="#6b6916" /><path d="M5 8l3-3 2 2-3 3z" fill="#f8f7c0" stroke="#777" /></Ic>
        <span className="ml-[5px]">21:59</span>
      </div>
    </div>
  );
}

function WinBtn({ children, className = "" }: P) {
  return <div className={"flex h-[11px] w-[13px] items-center justify-center " + raised + " " + className}><Ic className="h-[8px] w-[8px]">{children}</Ic></div>;
}

export default function App() {
  return (
    <div className="h-[768px] w-[1024px] overflow-hidden bg-white pt-[65px] pl-[86px] font-['DejaVu_Sans_Condensed','DejaVu_Sans',sans-serif] text-[9px] leading-[11px] text-[#1c1c1c]">
      <div className="relative flex h-[639px] w-[853px] flex-col bg-[#d4d0c8]">
        <div className="flex h-[13px] shrink-0 items-center bg-linear-to-r from-[#7f7f7f] to-[#c2c2c2] text-[#d8d5cc]">
          <Flash />
          <span className="ml-[2px] w-[500px] font-['DejaVu_Sans',sans-serif] text-[9px] font-bold tracking-[-0.410px]">Macromedia Flash MX Professional 2004 - [Untitled-1*]</span>
          <div className="flex h-[13px] w-[160px] items-center justify-between bg-black px-[3px] font-['DejaVu_Sans',sans-serif] text-[8.500px] font-bold whitespace-nowrap text-[#c4c343]">
            <span className="font-normal tracking-[0.500px] text-[#25c23c]">21:59:09</span><span className="tracking-[-0.250px]">Ср 05 сентября 2007</span>
          </div>
          <div className="mr-[1px] ml-auto flex">
            <WinBtn><path d="M2 11h7" stroke="#111" strokeWidth="2.500" /></WinBtn>
            <WinBtn><path d="M4 5V2h8v7H9M2 5h7v7H2z" stroke="#111" strokeWidth="1.800" /></WinBtn>
            <WinBtn className="ml-[2px]"><path d="M2 2l10 10M12 2L2 12" stroke="#111" strokeWidth="2.500" /></WinBtn>
          </div>
        </div>
        <div className="grid h-[18px] shrink-0 grid-cols-[23px_25px_28px_34px_37px_29px_53px_39px_41px_30px] items-center pl-[4px] text-[8.700px] text-[#928f88]">
          <span>File</span><span>Edit</span><span>View</span><span>Insert</span><span>Modify</span><span>Text</span><span>Commands</span><span>Control</span><span>Window</span><span>Help</span>
        </div>
        <div className="flex h-[581px] shrink-0 bg-[#6a6a6b]">
          <Tools />
          <div className="w-[6px] shrink-0 border-l border-[#999]" />
          <main className="flex w-[527px] shrink-0 flex-col">
            <Toolbar />
            <div className="h-[4px] shrink-0" />
            <Doc />
            <Stage />
            <div className="flex h-[13px] shrink-0 bg-[#ccc9c2]">
              <div className={"flex w-[14px] items-center justify-center " + raised}><Tri dir="left" /></div>
              <div className="w-[171px] bg-[#e9e7df]" />
              <div className="flex-1 border-b border-[#777] bg-[#d0ccc4]" />
            </div>
            <div className="flex h-[7px] shrink-0 bg-[#858585] pl-[268px]"><div className="flex h-[5px] w-[40px] items-center justify-center bg-[#b5b5b5]"><div className="h-[3px] w-[6px] bg-white [clip-path:polygon(0_0,100%_0,50%_100%)]" /></div></div>
            <PanelHead title="Help" dir="right" className="h-[16px]" />
            <div className="h-px shrink-0 bg-[#e2e5ea]" />
            <PanelHead title="Properties" className="h-[16px]" />
            <Properties />
          </main>
          <div className="w-[6px] shrink-0 border-l border-[#999] pt-[270px]"><div className="flex h-[39px] items-center bg-[#a9a9a9]"><div className="h-[6px] w-[3px] bg-white [clip-path:polygon(0_0,100%_50%,0_100%)]" /></div></div>
          <section className="flex w-[260px] shrink-0 flex-col">
            <PanelHead title="Color Mixer" menu className="h-[16px]" />
            <Mixer />
            <PanelHead title="Actions" menu />
            <Actions />
          </section>
        </div>
        <Taskbar />
        <Dialog />
        <div className="absolute top-[438px] left-[366px] h-[60px] w-[385px] border border-[#e6e6e6] bg-white pt-[5px] pl-[10px] font-[Carlito,Calibri,'Open_Sans','Noto_Sans',sans-serif] text-[18px] leading-[24px] whitespace-nowrap text-black shadow-[9px_9px_0_rgba(128,128,128,0.55)]">
          <div className="text-[20px]"><b>На новом слое</b> создаем планету и</div>
          <div className="text-[20px]">помещаем ее в библиотеку (F8)</div>
        </div>
      </div>
    </div>
  );
}
